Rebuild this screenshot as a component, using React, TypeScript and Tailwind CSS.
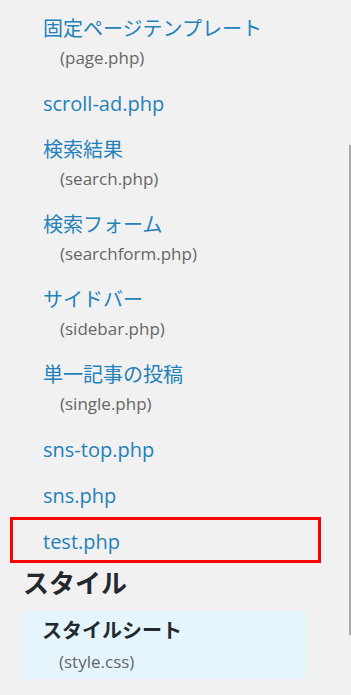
const items: { title: string; file?: string }[] = [
  { title: '固定ページテンプレート', file: 'page.php' },
  { title: 'scroll-ad.php' },
  { title: '検索結果', file: 'search.php' },
  { title: '検索フォーム', file: 'searchform.php' },
  { title: 'サイドバー', file: 'sidebar.php' },
  { title: '単一記事の投稿', file: 'single.php' },
  { title: 'sns-top.php' },
  { title: 'sns.php' },
]

const font = { fontFamily: '"Open Sans", "Noto Sans CJK JP", sans-serif' }

function FileItem({ title, file }: { title: string; file?: string }) {
  return (
    <li className="py-[10px] pl-5">
      <div className="text-[20px] leading-[26px] text-[#2481b9]">{title}</div>
      {file && <div className="mt-[3px] pl-[17px] text-[17px] leading-[26px] text-[#666]">({file})</div>}
    </li>
  )
}

export default function App() {
  return (
    <div className="flex h-[695px] overflow-hidden bg-[#f1f1f1]" style={font}>
      <div className="flex-1 pt-[6px] pl-[23px] pr-[43px]">
        <ul>
          {items.map((it) => (
            <FileItem key={it.title} {...it} />
          ))}
          <li className="relative py-[10px] pl-5">
            <div className="text-[20px] leading-[26px] text-[#2481b9]">test.php</div>
            <div className="absolute -left-[13px] -right-[15px] -top-[2px] h-[46px] border-[3px] border-[#ff0000]" />
          </li>
        </ul>

        <h2 className="mb-[10px] text-[26px] font-bold leading-[36px] text-[#23282d]">スタイル</h2>

        <div className="bg-[#e5f5fe] pb-[4px] pl-[19px] pt-[7px]">
          <div className="text-[20px] font-bold leading-[26px] text-[#23282d]">スタイルシート</div>
          <div className="mt-[5px] pl-[17px] text-[17px] leading-[26px] text-[#666]">(style.css)</div>
        </div>

        <div className="pt-[12px] pl-5 text-[20px] leading-[26px] text-[#2481b9]">editor-style.css</div>
      </div>
      <div className="w-[2px]">
        <div className="mt-[145px] h-[490px] bg-[#a9a9a9]" />
      </div>
    </div>
  )
}
